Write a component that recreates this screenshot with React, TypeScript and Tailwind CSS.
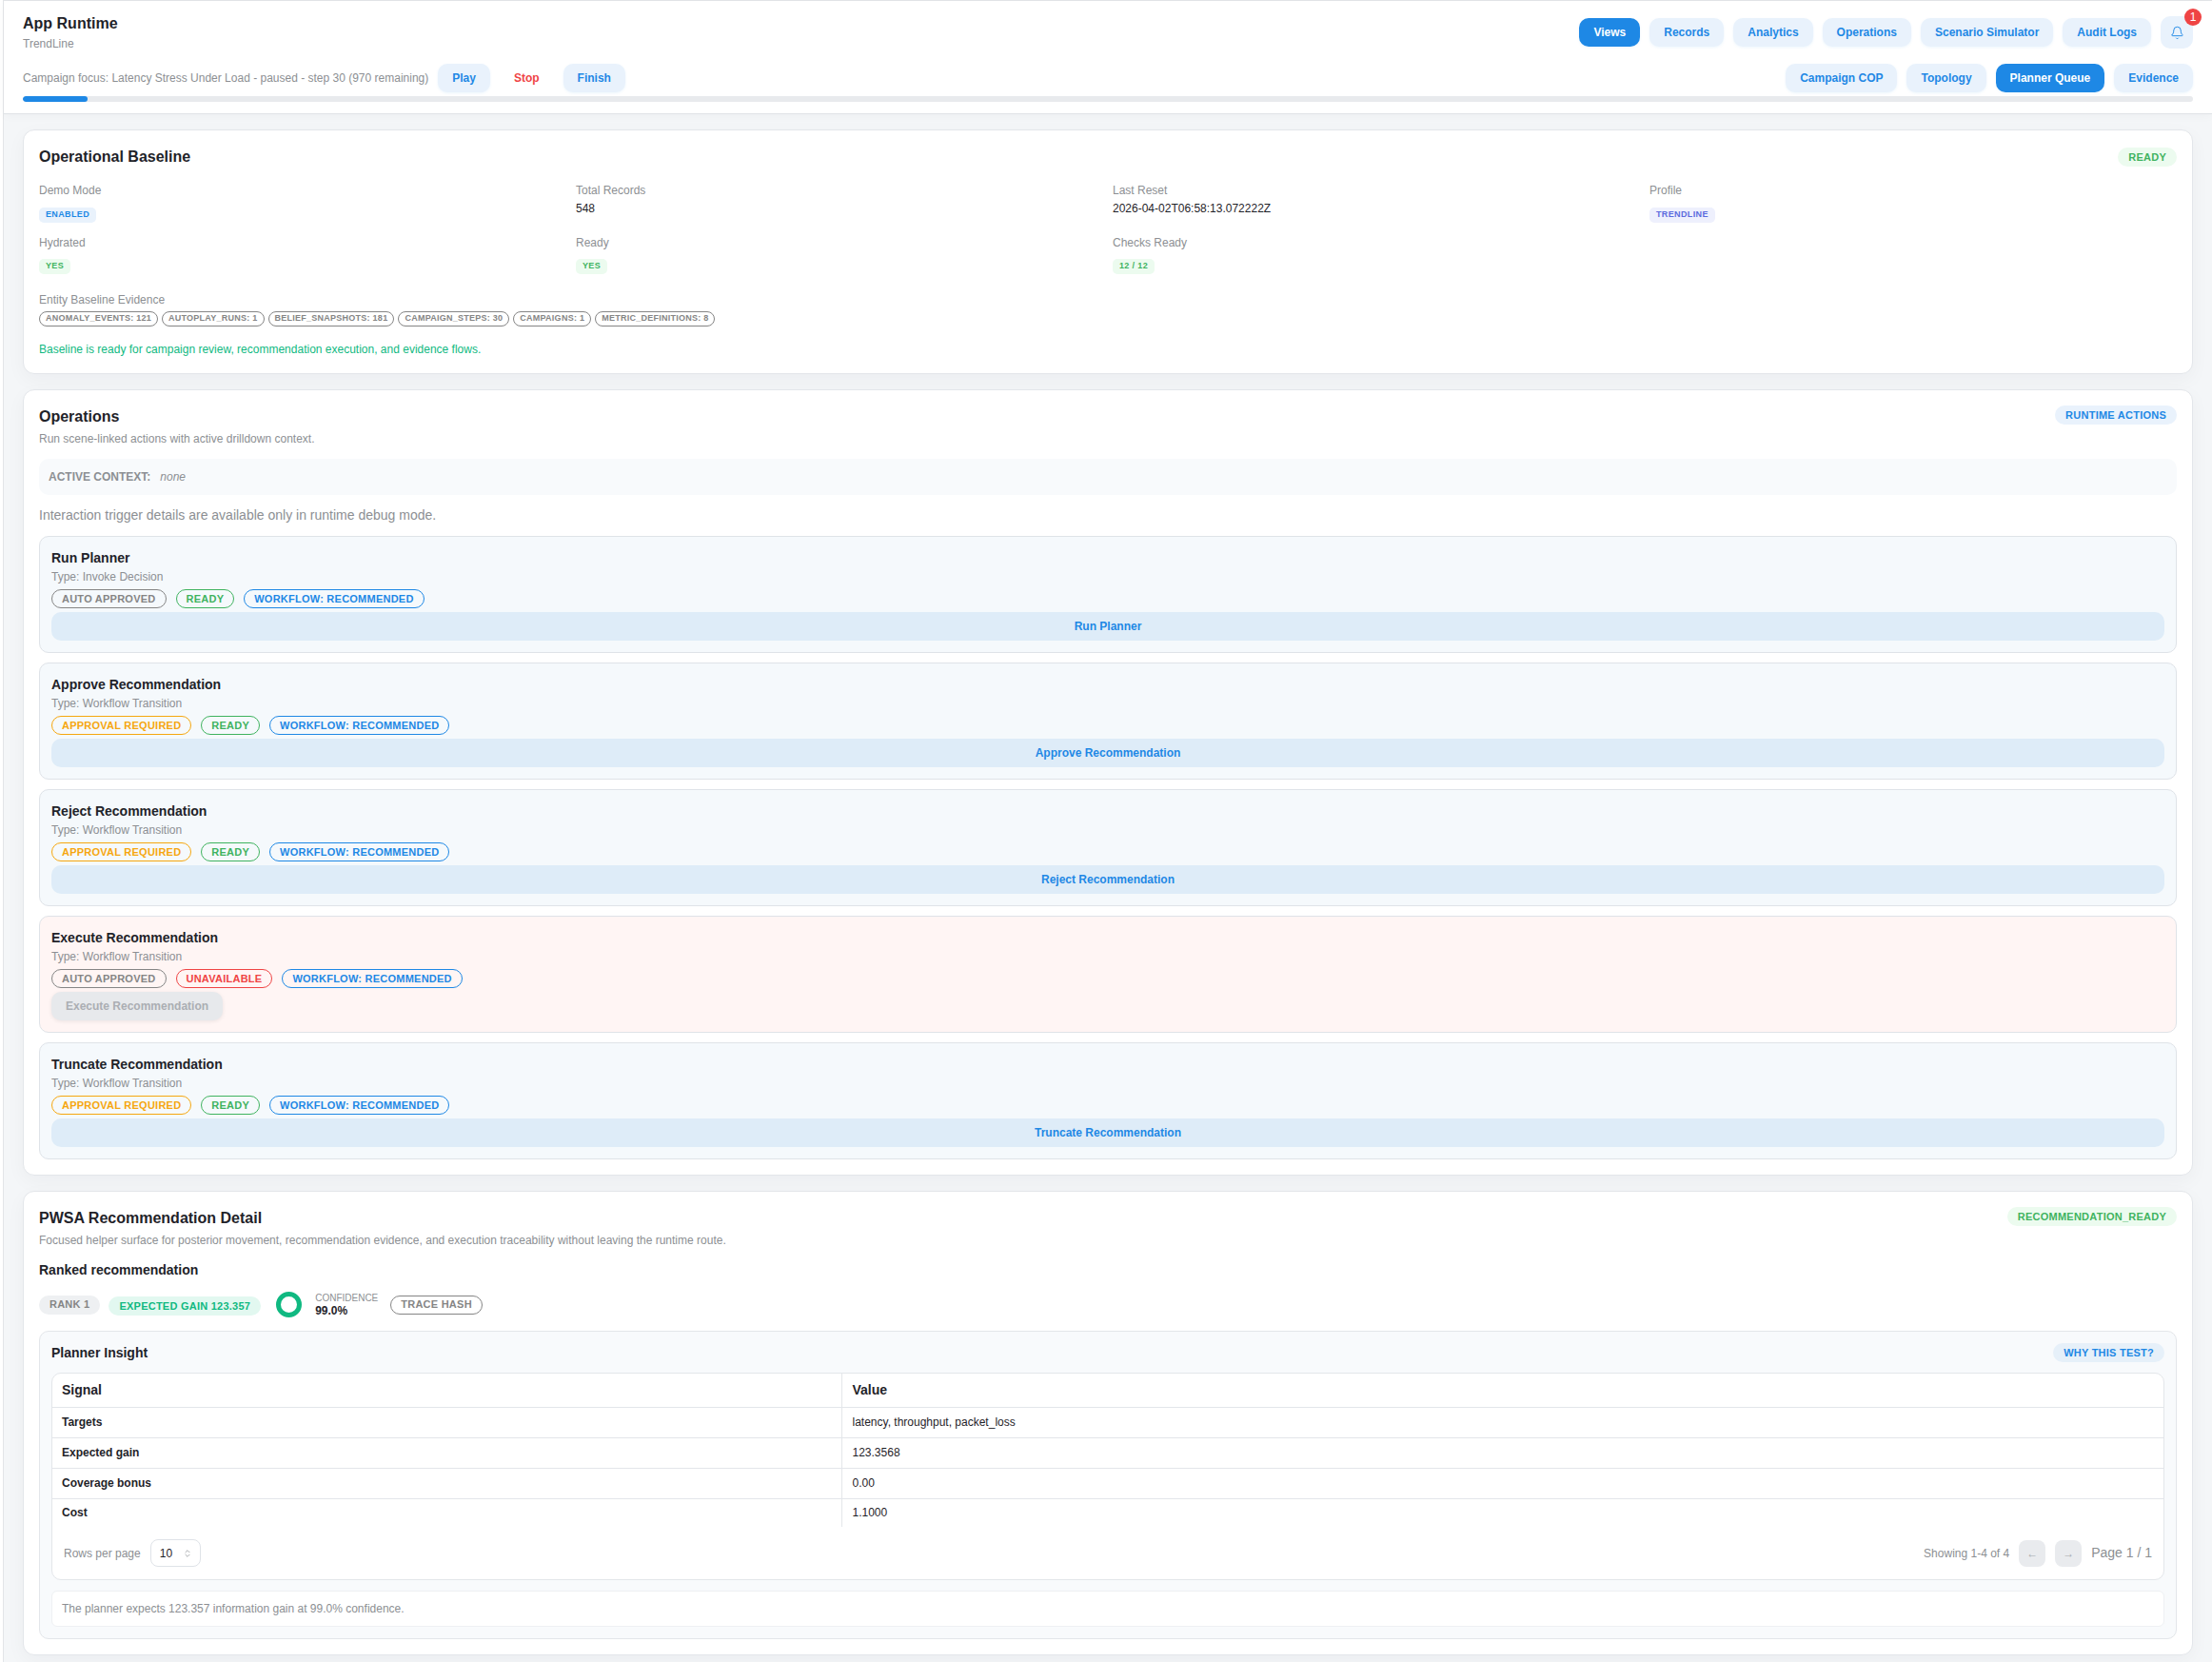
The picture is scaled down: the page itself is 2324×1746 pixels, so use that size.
import React from "react";
import { Bell, ChevronsUpDown } from "lucide-react";

const navClass = "h-[30px] px-[15px] rounded-[10px] text-[12px] font-bold flex items-center shadow-[0_1px_3px_rgba(30,136,229,0.08)]";
const active = "bg-[#1e88e5] text-white";
const idle = "bg-[#e9f2fc] text-[#1e88e5]";

function Nav({ label, on, danger }: { label: string; on?: boolean; danger?: boolean }) {
  return <button className={`${navClass} ${danger ? "text-[#ef4444] shadow-none" : on ? active : idle}`}>{label}</button>;
}

const tones: Record<string, string> = {
  gray: "border-[#858585] text-[#858585]",
  green: "border-[#3fb35f] text-[#3fb35f]",
  blue: "border-[#1e88e5] text-[#1e88e5]",
  orange: "border-[#f5a70f] text-[#f5a70f]",
  red: "border-[#ef4444] text-[#ef4444]",
};

function Outline({ label, tone }: { label: string; tone: string }) {
  return (
    <span className={`h-5 px-[10px] rounded-full border text-[11px] font-bold tracking-[0.022em] flex items-center whitespace-nowrap ${tones[tone]}`}>
      {label}
    </span>
  );
}

function Tiny({ label, cls }: { label: string; cls: string }) {
  return <span className={`inline-flex h-4 px-[7px] rounded-[5px] items-center text-[9px] font-bold tracking-[0.04em] ${cls}`}>{label}</span>;
}

function Pill({ label, cls }: { label: string; cls: string }) {
  return <span className={`inline-flex h-5 px-[11px] rounded-full items-center text-[11px] font-bold tracking-[0.022em] whitespace-nowrap ${cls}`}>{label}</span>;
}

function Card({ children }: { children: React.ReactNode }) {
  return <section className="rounded-xl border border-[#e3e6ea] bg-white p-4 shadow-[0_6px_20px_rgba(17,24,39,0.04)]">{children}</section>;
}

function Field({ label, children }: { label: string; children: React.ReactNode }) {
  return (
    <div>
      <div className="text-[12px] leading-[18px] text-[#8c8f93]">{label}</div>
      {children}
    </div>
  );
}

const chips = ["ANOMALY_EVENTS: 121", "AUTOPLAY_RUNS: 1", "BELIEF_SNAPSHOTS: 181", "CAMPAIGN_STEPS: 30", "CAMPAIGNS: 1", "METRIC_DEFINITIONS: 8"];

type Action = { name: string; type: string; approval: "auto" | "req"; ready: boolean };
const actions: Action[] = [
  { name: "Run Planner", type: "Invoke Decision", approval: "auto", ready: true },
  { name: "Approve Recommendation", type: "Workflow Transition", approval: "req", ready: true },
  { name: "Reject Recommendation", type: "Workflow Transition", approval: "req", ready: true },
  { name: "Execute Recommendation", type: "Workflow Transition", approval: "auto", ready: false },
  { name: "Truncate Recommendation", type: "Workflow Transition", approval: "req", ready: true },
];

function ActionCard({ a }: { a: Action }) {
  return (
    <div className={`rounded-[10px] border border-[#dfe3e8] px-3 pt-3 pb-3 ${a.ready ? "bg-[#f5f9fc]" : "bg-[#fff5f4]"}`}>
      <div className="text-[14px] leading-5 font-bold text-[#1f2329]">{a.name}</div>
      <div className="text-[12px] leading-[18px] mt-px text-[#8c8f93]">Type: {a.type}</div>
      <div className="flex gap-[10px] mt-1">
        {a.approval === "auto" ? <Outline label="AUTO APPROVED" tone="gray" /> : <Outline label="APPROVAL REQUIRED" tone="orange" />}
        {a.ready ? <Outline label="READY" tone="green" /> : <Outline label="UNAVAILABLE" tone="red" />}
        <Outline label="WORKFLOW: RECOMMENDED" tone="blue" />
      </div>
      {a.ready ? (
        <button className="mt-1 w-full h-[30px] rounded-[10px] bg-[#deecf8] text-[12px] font-bold text-[#1e88e5]">{a.name}</button>
      ) : (
        <button className="mt-1 h-[30px] px-[15px] rounded-[10px] bg-[#e7e9ec] text-[12px] font-bold text-[#abaeb3] shadow-[0_1px_4px_rgba(0,0,0,0.08)]">{a.name}</button>
      )}
    </div>
  );
}

const rows = [
  ["Targets", "latency, throughput, packet_loss"],
  ["Expected gain", "123.3568"],
  ["Coverage bonus", "0.00"],
  ["Cost", "1.1000"],
];

export default function App() {
  return (
    <div className="min-h-screen bg-white pl-[3px] font-['Liberation_Sans',Arial,sans-serif] text-[#1f2329]">
      <div className="min-h-screen bg-[#f4f6f8] border-l border-t border-[#e3e5e8]">
        <header className="bg-white border-b border-[#dfe2e6] pl-5 pr-5 pt-3 pb-3 shadow-[0_2px_10px_rgba(17,24,39,0.03)]">
          <div className="flex items-center justify-between">
            <div>
              <div className="text-[16px] leading-6 font-bold">App Runtime</div>
              <div className="text-[12px] leading-[18px] text-[#8c8f93]">TrendLine</div>
            </div>
            <div className="flex items-center gap-[10px]">
              <Nav label="Views" on />
              <Nav label="Records" />
              <Nav label="Analytics" />
              <Nav label="Operations" />
              <Nav label="Scenario Simulator" />
              <Nav label="Audit Logs" />
              <div className="relative">
                <button className="w-[34px] h-[34px] rounded-[10px] bg-[#e9f2fc] text-[#1e88e5] flex items-center justify-center">
                  <Bell size={15} strokeWidth={1.5} />
                </button>
                <span className="absolute left-[25px] top-[-8px] w-[18px] h-[18px] rounded-full bg-[#ef4444] text-white text-[12px] leading-[18px] text-center">1</span>
              </div>
            </div>
          </div>
          <div className="flex items-center justify-between mt-3">
            <div className="flex items-center">
              <span className="text-[12px] text-[#8c8f93] mr-[10px]">Campaign focus: Latency Stress Under Load - paused - step 30 (970 remaining)</span>
              <div className="flex items-center gap-[10px]">
                <Nav label="Play" />
                <Nav label="Stop" danger />
                <Nav label="Finish" />
              </div>
            </div>
            <div className="flex items-center gap-[10px]">
              <Nav label="Campaign COP" />
              <Nav label="Topology" />
              <Nav label="Planner Queue" on />
              <Nav label="Evidence" />
            </div>
          </div>
          <div className="mt-1 h-[6px] rounded-full bg-[#e8eaed] overflow-hidden">
            <div className="h-full w-[3%] rounded-full bg-[#1e88e5]" />
          </div>
        </header>

        <main className="pl-5 pr-5 pt-4 pb-2 flex flex-col gap-4">
          <Card>
            <div className="flex items-center justify-between h-6">
              <h2 className="text-[16px] font-bold">Operational Baseline</h2>
              <Pill label="READY" cls="bg-[#ecfbef] text-[#3fb35f]" />
            </div>
            <div className="grid grid-cols-4 gap-x-[10px] gap-y-3 mt-[14px]">
              <Field label="Demo Mode"><div className="mt-[9px] flex"><Tiny label="ENABLED" cls="bg-[#e9f2fc] text-[#1e88e5]" /></div></Field>
              <Field label="Total Records"><div className="text-[12px] leading-[18px] mt-px">548</div></Field>
              <Field label="Last Reset"><div className="text-[12px] leading-[18px] mt-px">2026-04-02T06:58:13.072222Z</div></Field>
              <Field label="Profile"><div className="mt-[9px] flex"><Tiny label="TRENDLINE" cls="bg-[#eef0fd] text-[#5c6bde]" /></div></Field>
              <Field label="Hydrated"><div className="mt-[8px] flex"><Tiny label="YES" cls="bg-[#ecfbef] text-[#3fb35f]" /></div></Field>
              <Field label="Ready"><div className="mt-[8px] flex"><Tiny label="YES" cls="bg-[#ecfbef] text-[#3fb35f]" /></div></Field>
              <Field label="Checks Ready"><div className="mt-[8px] flex"><Tiny label="12 / 12" cls="bg-[#ecfbef] text-[#3fb35f]" /></div></Field>
            </div>
            <div className="mt-[18px] text-[12px] leading-[18px] text-[#8c8f93]">Entity Baseline Evidence</div>
            <div className="mt-[3px] flex gap-1">
              {chips.map((c) => (
                <span key={c} className="h-4 px-[6px] rounded-full border border-[#858585] text-[9px] font-bold tracking-[0.028em] text-[#858585] flex items-center">{c}</span>
              ))}
            </div>
            <div className="mt-[15px] text-[12px] leading-[18px] text-[#10b981]">Baseline is ready for campaign review, recommendation execution, and evidence flows.</div>
          </Card>

          <Card>
            <div className="flex items-start justify-between h-6">
              <h2 className="text-[16px] leading-6 font-bold">Operations</h2>
              <Pill label="RUNTIME ACTIONS" cls="bg-[#e9f2fc] text-[#1e88e5]" />
            </div>
            <p className="text-[12px] leading-[18px] mt-[2px] text-[#8c8f93]">Run scene-linked actions with active drilldown context.</p>
            <div className="mt-[12px] h-[38px] rounded-[10px] bg-[#f8fafc] px-[10px] flex items-center gap-[10px] text-[12px] text-[#8c8f93]">
              <b>ACTIVE CONTEXT:</b>
              <i>none</i>
            </div>
            <p className="mt-[11px] text-[14px] leading-5 text-[#8c8f93]">Interaction trigger details are available only in runtime debug mode.</p>
            <div className="mt-3 flex flex-col gap-[10px]">
              {actions.map((a) => <ActionCard key={a.name} a={a} />)}
            </div>
          </Card>

          <Card>
            <div className="flex items-start justify-between h-6">
              <h2 className="text-[16px] leading-6 font-bold">PWSA Recommendation Detail</h2>
              <Pill label="RECOMMENDATION_READY" cls="bg-[#ecfbef] text-[#3fb35f]" />
            </div>
            <p className="text-[12px] leading-[18px] mt-[2px] text-[#8c8f93]">Focused helper surface for posterior movement, recommendation evidence, and execution traceability without leaving the runtime route.</p>
            <div className="text-[14px] leading-5 font-bold mt-[12px]">Ranked recommendation</div>
            <div className="flex items-center mt-[13px] h-[27px]">
              <Pill label="RANK 1" cls="bg-[#eef0f2] text-[#858585]" />
              <span className="ml-[9px]"><Pill label="EXPECTED GAIN 123.357" cls="bg-[#e2f8f0] text-[#10b981]" /></span>
              <div className="ml-4 w-[27px] h-[27px] rounded-full border-[5px] border-[#10b981]" />
              <div className="ml-[14px] leading-none">
                <div className="text-[10px] leading-[13px] text-[#8c8f93]">CONFIDENCE</div>
                <div className="text-[12px] leading-[15px] font-bold">99.0%</div>
              </div>
              <span className="ml-[13px]"><Outline label="TRACE HASH" tone="gray" /></span>
            </div>

            <div className="mt-[14px] rounded-[10px] border border-[#e3e6ea] bg-[#f8fafc] px-3 pt-3 pb-3">
              <div className="flex items-center justify-between h-5">
                <div className="text-[14px] font-bold">Planner Insight</div>
                <Pill label="WHY THIS TEST?" cls="bg-[#e6f0f9] text-[#1e88e5]" />
              </div>
              <div className="mt-[11px] rounded-[10px] border border-[#e3e6ea] bg-white">
                <table className="w-full border-collapse table-fixed">
                  <colgroup>
                    <col className="w-[829px]" />
                    <col />
                  </colgroup>
                  <thead>
                    <tr className="h-[35px] border-b border-[#e3e6ea]">
                      <th className="text-left px-[10px] text-[14px] font-bold border-r border-[#e3e6ea]">Signal</th>
                      <th className="text-left pl-[11px] pr-[10px] text-[14px] font-bold">Value</th>
                    </tr>
                  </thead>
                  <tbody>
                    {rows.map((r, i) => (
                      <tr key={r[0]} className={i < 3 ? "h-[32px] border-b border-[#e3e6ea]" : "h-[30px]"}>
                        <td className="px-[10px] text-[12px] font-bold border-r border-[#e3e6ea]">{r[0]}</td>
                        <td className="pl-[11px] pr-[10px] text-[12px]">{r[1]}</td>
                      </tr>
                    ))}
                  </tbody>
                </table>
                <div className="flex items-center justify-between pl-3 pr-3 pt-[13px] pb-[13px]">
                  <div className="flex items-center gap-[10px]">
                    <span className="text-[12px] text-[#8c8f93]">Rows per page</span>
                    <div className="w-[53px] h-[29px] rounded-[8px] border border-[#dfe3e8] flex items-center justify-between pl-[9px] pr-[8px] text-[12px]">
                      <span>10</span>
                      <ChevronsUpDown size={10} className="text-[#9a9da1]" />
                    </div>
                  </div>
                  <div className="flex items-center gap-[10px]">
                    <span className="text-[12px] text-[#8c8f93]">Showing 1-4 of 4</span>
                    <span className="w-7 h-7 rounded-[8px] bg-[#e9ebee] text-[#a8abb0] text-[12px] flex items-center justify-center">←</span>
                    <span className="w-7 h-7 rounded-[8px] bg-[#e9ebee] text-[#a8abb0] text-[12px] flex items-center justify-center">→</span>
                    <span className="text-[14px] text-[#8c8f93]">Page 1 / 1</span>
                  </div>
                </div>
              </div>
              <div className="mt-[11px] h-[38px] rounded-[6px] border border-[#eef0f3] bg-white px-[10px] flex items-center text-[12px] text-[#8c8f93]">
                The planner expects 123.357 information gain at 99.0% confidence.
              </div>
            </div>
          </Card>
        </main>
      </div>
    </div>
  );
}
